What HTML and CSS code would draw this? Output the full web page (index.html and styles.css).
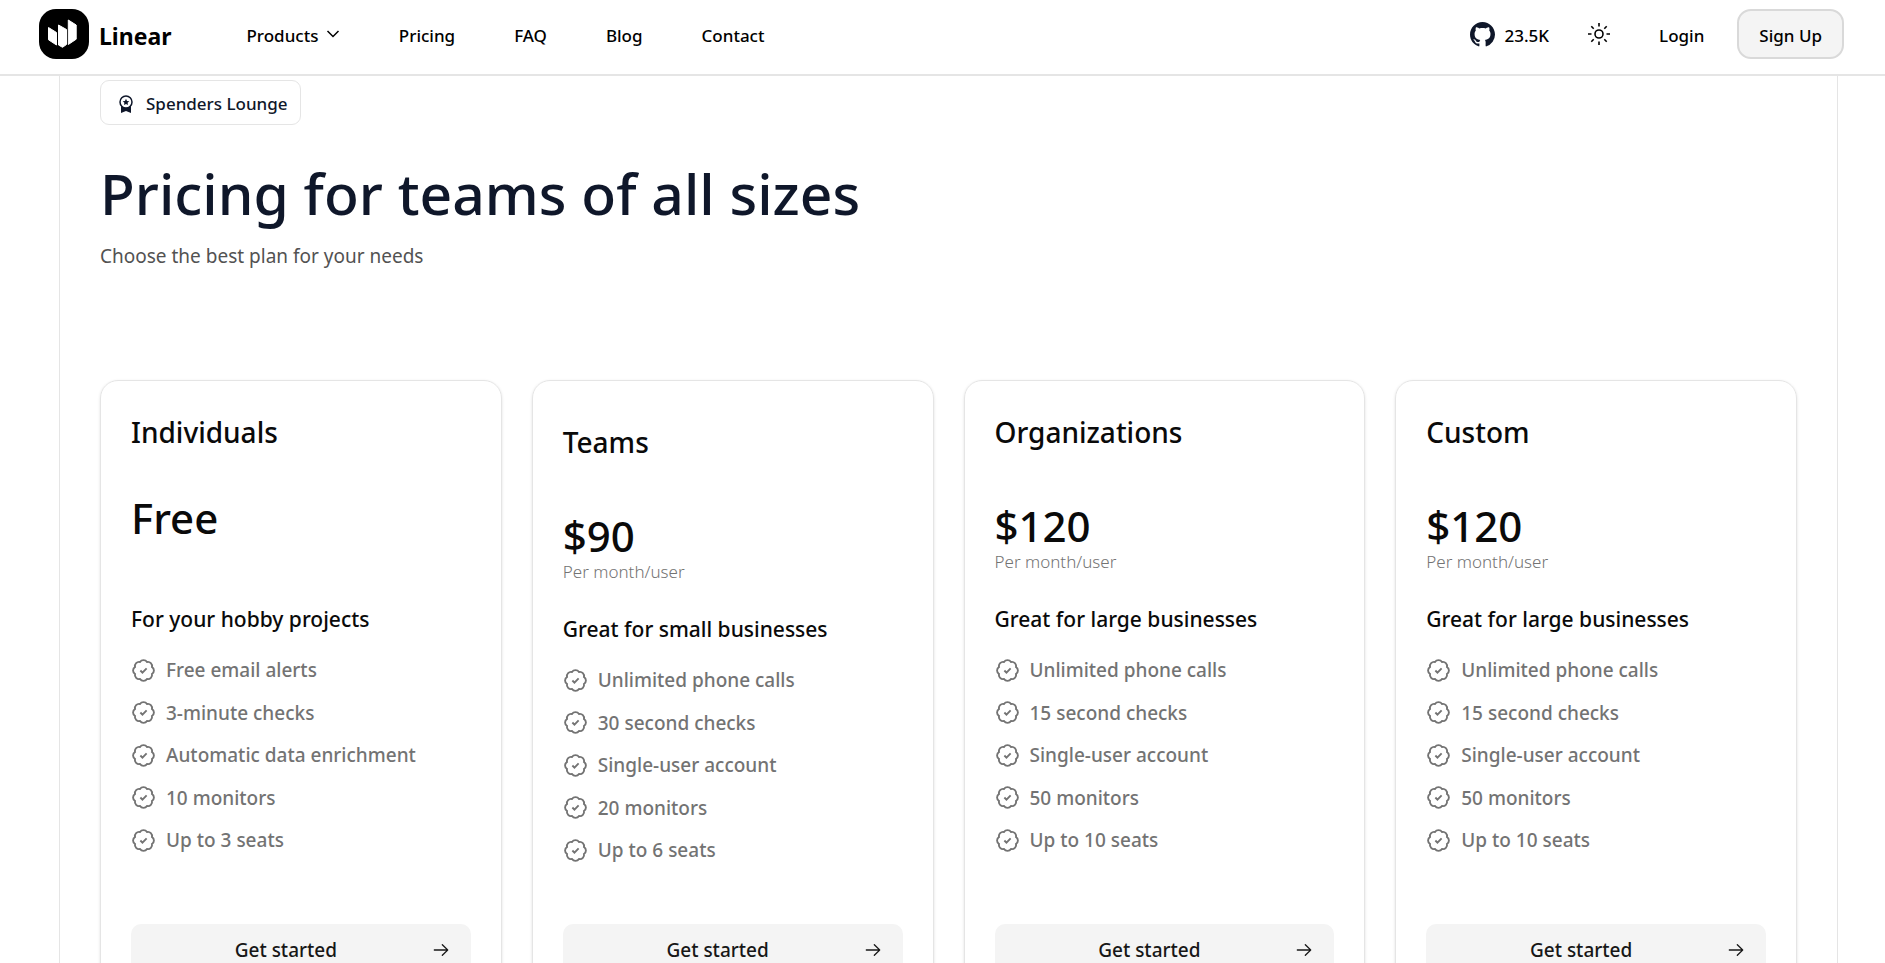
FILE: index.html
```html
<!DOCTYPE html>
<html lang="en">
  <head>
    <meta charset="UTF-8" />
    <title>Linear - Pricing</title>
    <link rel="stylesheet" href="styles.css">
  </head>
  <body>
    <!-- shared icons -->
    <svg class="sprite" aria-hidden="true">
      <symbol id="icon-check" viewBox="0 0 24 24">
        <path d="M3.85 8.62a4 4 0 0 1 4.78-4.77 4 4 0 0 1 6.74 0 4 4 0 0 1 4.78 4.78 4 4 0 0 1 0 6.74 4 4 0 0 1-4.77 4.78 4 4 0 0 1-6.75 0 4 4 0 0 1-4.78-4.77 4 4 0 0 1 0-6.76Z"/>
        <path d="m9 12 2 2 4-4"/>
      </symbol>
      <symbol id="icon-arrow" viewBox="0 0 15 15">
        <path fill="currentColor" fill-rule="evenodd" d="M8.146 3.146a.5.5 0 0 1 .708 0l4 4a.5.5 0 0 1 0 .708l-4 4a.5.5 0 0 1-.708-.708L11.293 8H2.5a.5.5 0 0 1 0-1h8.793L8.146 3.854a.5.5 0 0 1 0-.708Z"/>
      </symbol>
    </svg>

    <header class="header">
      <a class="brand" href="#">
        <svg class="logo" viewBox="0 0 50 50" aria-hidden="true">
          <rect width="50" height="50" rx="17"/>
          <path fill="#fff" stroke="#fff" stroke-linejoin="round" d="M9.500 18.500 17.500 23.500V36L9.500 30.800Z"/>
          <path fill="#fff" stroke="#fff" stroke-linejoin="round" d="M19.500 16 27.500 20.500V35.500L23.500 38.300 19.500 36Z"/>
          <path fill="#fff" stroke="#fff" stroke-linejoin="round" d="M29.300 11 37.200 16V30.200L29.300 35.500Z"/>
        </svg>
        <span class="brand-name">Linear</span>
      </a>
      <nav class="nav">
        <button type="button" class="nav-link">Products
          <svg class="chevron" viewBox="0 0 14 14" aria-hidden="true"><path d="m1.500 3 5.500 5.500L12.500 3"/></svg>
        </button>
        <a class="nav-link" href="#">Pricing</a>
        <a class="nav-link" href="#">FAQ</a>
        <a class="nav-link" href="#">Blog</a>
        <a class="nav-link" href="#">Contact</a>
      </nav>
      <div class="actions">
        <a class="github" href="#">
          <svg class="github-icon" viewBox="0 0 16 16" aria-hidden="true"><path d="M8 0C3.580 0 0 3.580 0 8c0 3.540 2.290 6.530 5.470 7.590.4.070.55-.17.55-.38 0-.19-.01-.82-.01-1.490-2.010.37-2.530-.49-2.690-.94-.09-.23-.48-.94-.82-1.130-.28-.15-.68-.52-.01-.53.63-.01 1.080.58 1.230.82.72 1.210 1.870.87 2.330.66.07-.52.28-.87.51-1.070-1.780-.2-3.640-.89-3.640-3.950 0-.87.31-1.590.82-2.150-.08-.2-.36-1.020.08-2.120 0 0 .67-.21 2.200.82.64-.18 1.320-.27 2-.27s1.360.09 2 .27c1.530-1.040 2.200-.82 2.200-.82.44 1.100.16 1.920.08 2.120.51.56.82 1.270.82 2.150 0 3.070-1.870 3.750-3.650 3.950.29.25.54.73.54 1.480 0 1.070-.01 1.930-.01 2.200 0 .21.15.46.55.38A8.010 8.010 0 0 0 16 8c0-4.420-3.580-8-8-8Z"/></svg>
          <span class="nav-link">23.5K</span>
        </a>
        <button type="button" class="theme" aria-label="Toggle theme">
          <svg viewBox="0 0 24 24" aria-hidden="true"><circle cx="12" cy="12" r="4"/><path d="M12 1v3.500M12 19.500V23M1 12h3.500M19.500 12H23M4.300 4.300l2.400 2.400M17.300 17.300l2.400 2.400M4.300 19.700l2.400-2.400M17.300 6.700l2.400-2.400"/></svg>
        </button>
        <a class="nav-link" href="#">Login</a>
        <button type="button" class="signup nav-link">Sign Up</button>
      </div>
    </header>

    <main class="container">
      <div class="tag">
        <svg class="tag-icon" viewBox="0 0 16 20" aria-hidden="true">
          <path d="M3 12h10v7l-5-2-5 2Z"/>
          <circle class="ring" cx="8" cy="8" r="6"/>
          <path d="m8 4.800 1 2.100 2.300.3-1.700 1.600.4 2.300-2-1.100-2 1.100.4-2.300-1.700-1.600 2.300-.3Z"/>
        </svg>
        Spenders Lounge
      </div>
      <h1>Pricing for teams of all sizes</h1>
      <p class="subtitle">Choose the best plan for your needs</p>

      <div class="plans">
        <section class="card">
          <h2>Individuals</h2>
          <div class="price free"><strong>Free</strong></div>
          <h3>For your hobby projects</h3>
          <ul>
            <li><svg><use href="#icon-check"/></svg>Free email alerts</li>
            <li><svg><use href="#icon-check"/></svg>3-minute checks</li>
            <li><svg><use href="#icon-check"/></svg>Automatic data enrichment</li>
            <li><svg><use href="#icon-check"/></svg>10 monitors</li>
            <li><svg><use href="#icon-check"/></svg>Up to 3 seats</li>
          </ul>
          <button type="button" class="start"><span>Get started</span><svg><use href="#icon-arrow"/></svg></button>
        </section>

        <section class="card featured">
          <h2>Teams</h2>
          <div class="price"><strong>$90</strong><small>Per month/user</small></div>
          <h3>Great for small businesses</h3>
          <ul>
            <li><svg><use href="#icon-check"/></svg>Unlimited phone calls</li>
            <li><svg><use href="#icon-check"/></svg>30 second checks</li>
            <li><svg><use href="#icon-check"/></svg>Single-user account</li>
            <li><svg><use href="#icon-check"/></svg>20 monitors</li>
            <li><svg><use href="#icon-check"/></svg>Up to 6 seats</li>
          </ul>
          <button type="button" class="start"><span>Get started</span><svg><use href="#icon-arrow"/></svg></button>
        </section>

        <section class="card">
          <h2>Organizations</h2>
          <div class="price"><strong>$120</strong><small>Per month/user</small></div>
          <h3>Great for large businesses</h3>
          <ul>
            <li><svg><use href="#icon-check"/></svg>Unlimited phone calls</li>
            <li><svg><use href="#icon-check"/></svg>15 second checks</li>
            <li><svg><use href="#icon-check"/></svg>Single-user account</li>
            <li><svg><use href="#icon-check"/></svg>50 monitors</li>
            <li><svg><use href="#icon-check"/></svg>Up to 10 seats</li>
          </ul>
          <button type="button" class="start"><span>Get started</span><svg><use href="#icon-arrow"/></svg></button>
        </section>

        <section class="card">
          <h2>Custom</h2>
          <div class="price"><strong>$120</strong><small>Per month/user</small></div>
          <h3>Great for large businesses</h3>
          <ul>
            <li><svg><use href="#icon-check"/></svg>Unlimited phone calls</li>
            <li><svg><use href="#icon-check"/></svg>15 second checks</li>
            <li><svg><use href="#icon-check"/></svg>Single-user account</li>
            <li><svg><use href="#icon-check"/></svg>50 monitors</li>
            <li><svg><use href="#icon-check"/></svg>Up to 10 seats</li>
          </ul>
          <button type="button" class="start"><span>Get started</span><svg><use href="#icon-arrow"/></svg></button>
        </section>
      </div>
    </main>
  </body>
</html>
```

FILE: styles.css
```css
*{margin: 0;padding: 0;box-sizing: border-box}
body{
  height: 100vh;
  overflow: hidden;
  background: #fff;
  color: #0a0a0a;
  font-family: "Segoe UI", "Noto Sans", sans-serif;
  font-weight: 500;
}
a{
  color: inherit;
  text-decoration: none;
}
button{
  border: 0;
  background: none;
  color: inherit;
  font: inherit;
  cursor: pointer;
}
ul{
  list-style: none;
}
.sprite{
  display: none;
}

/* header */
.header{
  display: flex;
  align-items: center;
  padding: 9px 41px 15px 39px;
  border-bottom: 2px solid #e5e5e5;
  color: #000;
}
.brand{
  display: flex;
  align-items: center;
  gap: 10px;
}
.logo{
  width: 50px;
  height: 50px;
}
.brand-name{
  padding-top: 4px;
  font-size: 23px;
  line-height: 30px;
  font-weight: 700;
}
.nav{
  display: flex;
  align-items: center;
  gap: 59px;
  margin-left: 75px;
}
.nav-link{
  padding-top: 3px;
  font-size: 17px;
  line-height: 24px;
}
.chevron{
  width: 14px;
  height: 14px;
  margin-left: 3px;
  fill: none;
  stroke: currentColor;
  stroke-width: 1.5;
}
.actions{
  display: flex;
  align-items: center;
  margin-left: auto;
}
.github{
  display: flex;
  align-items: center;
  gap: 10px;
}
.github-icon{
  width: 25px;
  height: 25px;
  fill: #0f172a;
}
.theme{
  margin: 0 48px 0 38px;
}
.theme svg{
  display: block;
  width: 24px;
  height: 24px;
  fill: none;
  stroke: currentColor;
  stroke-width: 1.6;
}
.signup{
  height: 50px;
  margin-left: 33px;
  padding: 3px 20px 0;
  border: 2px solid #d9d9d9;
  border-radius: 14px;
  background: #f4f4f4;
}

/* pricing */
.container{
  margin: 0 47px 0 59px;
  padding: 4px 40px 60px;
  border: 1px solid #e5e5e5;
  border-width: 0 1px;
}
.tag{
  display: inline-flex;
  align-items: center;
  gap: 11px;
  height: 45px;
  padding: 2px 12px 0 16px;
  border: 1px solid #e5e5e5;
  border-radius: 9px;
  color: #0f172a;
  font-size: 17px;
}
.tag-icon{
  width: 18px;
  height: 20px;
  fill: #0f172a;
}
.tag-icon .ring{
  fill: #fff;
  stroke: #0f172a;
  stroke-width: 1.5;
}
h1{
  margin-top: 38px;
  color: #0f172a;
  font-size: 57px;
  line-height: 60px;
  font-weight: 500;
}
.subtitle{
  margin-top: 18px;
  color: #525252;
  font-size: 19px;
  line-height: 30px;
  font-weight: 400;
}
.plans{
  display: grid;
  grid-template-columns: repeat(4, 1fr);
  gap: 30px;
  margin-top: 109px;
}
.card{
  display: flex;
  flex-direction: column;
  padding: 30px;
  border: 1px solid #e5e5e5;
  border-radius: 18px;
  box-shadow: 0 1px 3px rgba(0, 0, 0, .12);
}
.featured{
  padding-top: 40px;
}
.card h2{
  font-size: 28px;
  line-height: 42px;
  font-weight: 500;
}
.price{
  height: 108px;
  margin-top: 42px;
  padding-top: 8px;
}
.free{
  padding-top: 0;
}
.price strong{
  display: block;
  font-size: 42px;
  line-height: 46px;
  font-weight: 500;
}
.price small{
  display: block;
  color: #737373;
  font-size: 17px;
  line-height: 26px;
  font-weight: 300;
}
.card h3{
  font-size: 21px;
  line-height: 32px;
  font-weight: 500;
}
.card ul{
  display: flex;
  flex-direction: column;
  justify-content: space-between;
  height: 200px;
  margin-top: 20px;
  margin-bottom: 59px;
  color: #737373;
}
.card li{
  display: flex;
  align-items: center;
  gap: 10px;
  font-size: 19px;
  line-height: 30px;
}
.card li svg{
  width: 25px;
  height: 25px;
  fill: none;
  stroke: currentColor;
  stroke-width: 1.8;
}
/* buttons line up along the bottom of the row */
.start{
  display: flex;
  align-items: center;
  width: 100%;
  height: 52px;
  margin-top: auto;
  padding: 0 20px 0 10px;
  border-radius: 10px;
  background: #f4f4f4;
  color: #171717;
  font-size: 19px;
}
.start span{
  flex: 1;
}
.start svg{
  width: 20px;
  height: 20px;
}
.card:not(.featured) ul{
  margin-bottom: 69px;
}
```
